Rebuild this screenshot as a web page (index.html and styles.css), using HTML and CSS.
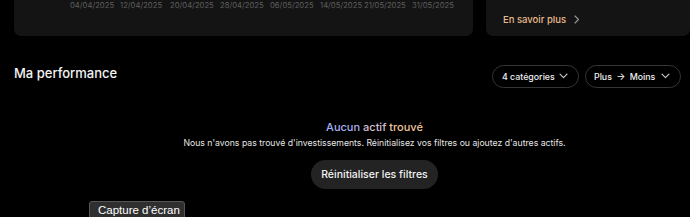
FILE: index.html
```html
<!DOCTYPE html>
<html lang="fr">
<head>
<meta charset="utf-8">
<link rel="stylesheet" href="styles.css">
</head>
<body>
<div class="top">
  <div class="card chart-card">
    <div class="ticks">
      <span class="tick">04/04/2025</span>
      <span class="tick">12/04/2025</span>
      <span class="tick">20/04/2025</span>
      <span class="tick">28/04/2025</span>
      <span class="tick">06/05/2025</span>
      <span class="tick tick-s">14/05/2025</span>
      <span class="tick tick-m">21/05/2025</span>
      <span class="tick">31/05/2025</span>
    </div>
  </div>
  <div class="card info-card">
    <a class="more">En savoir plus
      <svg width="6" height="9" viewBox="0 0 6 9"><path d="M1 1l3.5 3.5L1 8" fill="none" stroke="#9a9a9a" stroke-width="1.1" stroke-linecap="round" stroke-linejoin="round"/></svg>
    </a>
  </div>
</div>

<section class="perf">
  <div class="perf-head">
    <h2>Ma performance</h2>
    <div class="filters">
      <button class="pill pill-cat"><span>4 catégories</span>
        <svg width="9" height="6" viewBox="0 0 9 6"><path d="M1 1.2l3.5 3.5L8 1.2" fill="none" stroke="#cfcfcf" stroke-width="1.1" stroke-linecap="round" stroke-linejoin="round"/></svg>
      </button>
      <button class="pill pill-sort"><span>Plus <span class="arrow">→</span> Moins</span>
        <svg width="9" height="6" viewBox="0 0 9 6"><path d="M1 1.2l3.5 3.5L8 1.2" fill="none" stroke="#cfcfcf" stroke-width="1.1" stroke-linecap="round" stroke-linejoin="round"/></svg>
      </button>
    </div>
  </div>
  <div class="empty">
    <p class="empty-title"><span class="w1">Aucun</span> <span class="w2">actif</span> <span class="w3">trouvé</span></p>
    <p class="empty-text">Nous n'avons pas trouvé d'investissements. Réinitialisez vos filtres ou ajoutez d'autres actifs.</p>
    <button class="reset">Réinitialiser les filtres</button>
  </div>
</section>

<div class="tooltip">Capture d’écran</div>
</body>
</html>
```

FILE: styles.css
```css
* { box-sizing: border-box; }
html, body { margin: 0; padding: 0; }
body {
  background: #000;
  width: 690px;
  height: 217px;
  overflow: hidden;
  position: relative;
  font-family: Inter, "Noto Sans", sans-serif;
  color: #f2f2f2;
}
.top {
  display: flex;
  gap: 13px;
  padding-left: 14px;
  height: 36px;
}
.card {
  background: #141414;
  border-radius: 0 0 7px 7px;
  height: 36px;
}
.chart-card {
  width: 459px;
  padding: 1px 0 0 56px;
}
.ticks {
  display: flex;
  font-size: 7.7px;
  color: #5e5e5e;
  white-space: nowrap;
}
.tick { width: 50px; flex: none; }
.tick-s { width: 44px; }
.tick-m { width: 48px; }
.info-card {
  flex: 1;
  padding: 7px 0 0 17px;
}
.more {
  display: inline-flex;
  align-items: center;
  gap: 8px;
  font-size: 9.5px;
  font-weight: 500;
  color: #e8bb8e;
}
.perf {
  padding: 0 9px 0 14px;
}
.perf-head {
  display: flex;
  align-items: center;
  justify-content: space-between;
  margin-top: 29px;
  height: 22px;
}
.perf-head h2 {
  margin: 0;
  font-size: 13px;
  font-weight: 500;
  color: #f4f4f4;
  position: relative;
  top: -3px;
}
.filters { display: flex; gap: 6px; }
.pill {
  display: inline-flex;
  align-items: center;
  justify-content: space-between;
  height: 23px;
  padding: 0 10px 0 9px;
  border: 1px solid #363636;
  border-radius: 12px;
  background: #000;
  color: #f0f0f0;
  font-family: inherit;
  font-size: 8.8px;
  font-weight: 500;
  white-space: nowrap;
}
.pill-cat { width: 87px; }
.pill-sort { width: 96px; padding-left: 8px; }
.arrow { font-size: 9.5px; margin: 0 2px; }
.empty {
  display: flex;
  flex-direction: column;
  align-items: center;
  margin-left: 54px;
  padding-top: 33px;
}
.empty-title {
  margin: 0;
  font-size: 11px;
  font-weight: 500;
  line-height: 14px;
}
.w1 { color: #a9b0f0; }
.w2 { color: #d6bfcf; }
.w3 { color: #f2c59c; }
.empty-text {
  margin: 3px 0 0;
  font-size: 8.7px;
  line-height: 12px;
  color: #e6e6e6;
}
.reset {
  margin-top: 11px;
  height: 29px;
  width: 127px;
  border: 0;
  border-radius: 15px;
  background: #232323;
  color: #f2f2f2;
  font-family: inherit;
  font-size: 10.5px;
  font-weight: 500;
}
.tooltip {
  position: absolute;
  left: 89px;
  top: 201px;
  width: 96px;
  height: 20px;
  padding: 2px 0 0 8px;
  background: #2f2f2f;
  border: 1px solid #555;
  border-radius: 3px;
  font-family: "Liberation Sans", Arial, sans-serif;
  font-size: 11.5px;
  color: #fff;
}
```
